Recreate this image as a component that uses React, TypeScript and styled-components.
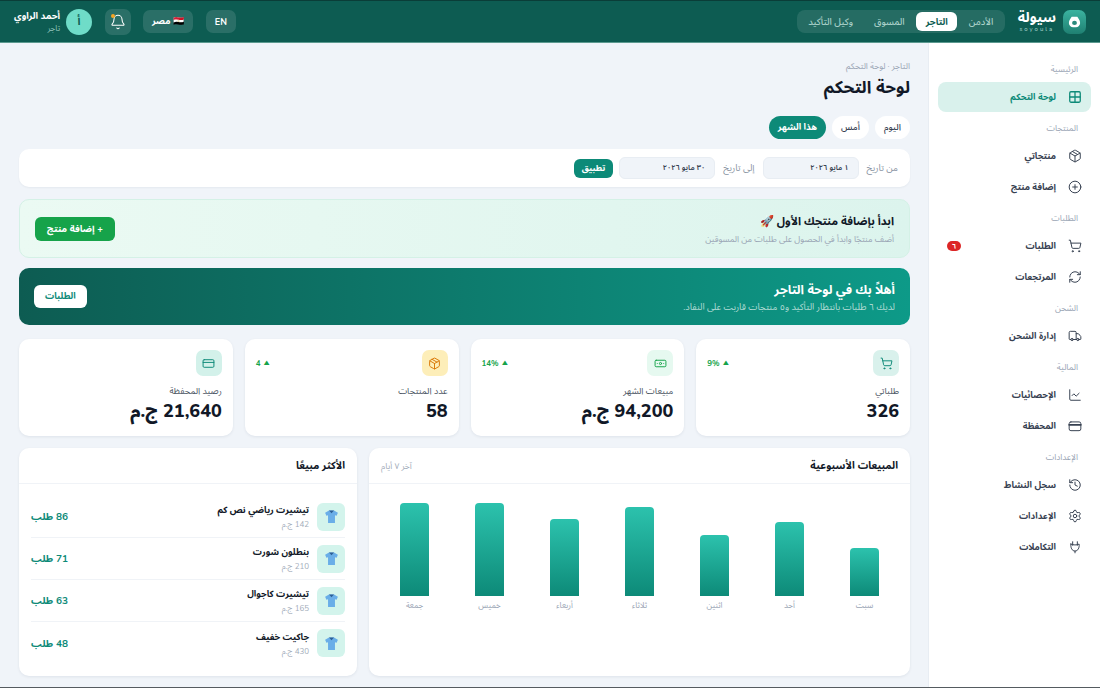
import React from 'react'
import styled, { createGlobalStyle } from 'styled-components'
import {
  Grid2x2, Package, CirclePlus, ShoppingCart, RefreshCw, Truck, ChartLine,
  History, Settings, Bell, Banknote, CreditCard,
} from 'lucide-react'

const GlobalStyle = createGlobalStyle`
  * { box-sizing: border-box; }
  html, body { margin: 0; padding: 0; height: 100%; }
  body {
    font-family: "Nunito", "Inter", "Noto Sans Arabic", "DejaVu Sans", sans-serif;
    background: #f0f4f9;
    color: #111827;
  }
`

const Shell = styled.div`
  width: 1100px;
  height: 688px;
  overflow: hidden;
  display: flex;
  flex-direction: column;
  border-bottom: 1px solid #555b60;
`

const Header = styled.header`
  height: 43px;
  flex: none;
  display: flex;
  align-items: center;
  justify-content: space-between;
  padding: 0 14px;
  background: #0d5c52;
  border-top: 1px solid #0a3d38;
  border-bottom: 1px solid #5c9a90;
`

const HeaderSide = styled.div`
  display: flex;
  align-items: center;
`

const LogoBox = styled.div`
  width: 23px;
  height: 24px;
  border-radius: 7px;
  background: linear-gradient(180deg, #3bb3a0, #1f8072);
  display: flex;
  align-items: center;
  justify-content: center;
  margin-left: 7px;
`

const LogoText = styled.div`
  display: flex;
  flex-direction: column;
  align-items: center;
  margin-left: 13px;
`

const LogoName = styled.span`
  font-size: 14px;
  font-weight: 700;
  line-height: 16px;
  color: #fff;
`

const LogoLatin = styled.span`
  font-size: 6px;
  line-height: 7px;
  letter-spacing: 2px;
  color: #a7d5cd;
`

const RoleTabs = styled.div`
  height: 23px;
  display: flex;
  align-items: center;
  gap: 2px;
  padding: 2px;
  border-radius: 8px;
  background: rgba(255, 255, 255, 0.1);
`

const RoleTab = styled.div<{ $active?: boolean }>`
  height: 19px;
  display: flex;
  align-items: center;
  padding: 0 9.5px;
  border-radius: 6px;
  font-size: 9.3px;
  font-weight: ${(p) => (p.$active ? 700 : 500)};
  color: ${(p) => (p.$active ? '#0d5c52' : '#a9d0c9')};
  background: ${(p) => (p.$active ? '#fff' : 'transparent')};
`

const HeaderButton = styled.div`
  height: 23px;
  padding: 0 9px;
  margin-right: 13px;
  display: flex;
  align-items: center;
  gap: 6px;
  border-radius: 7px;
  background: rgba(255, 255, 255, 0.12);
  color: #fff;
  font-size: 9px;
  font-weight: 700;
`

const BellButton = styled.div`
  position: relative;
  width: 26px;
  height: 26px;
  margin-right: 12px;
  display: flex;
  align-items: center;
  justify-content: center;
  border-radius: 7px;
  background: rgba(255, 255, 255, 0.12);
  color: #fff;
`

const BellDot = styled.span`
  position: absolute;
  top: 5px;
  left: 6px;
  width: 4px;
  height: 4px;
  border-radius: 50%;
  background: #f5a524;
`

const Avatar = styled.div`
  width: 26px;
  height: 26px;
  margin-right: 13px;
  border-radius: 50%;
  background: #6fdcc8;
  color: #0d5c52;
  font-size: 11px;
  font-weight: 700;
  display: flex;
  align-items: center;
  justify-content: center;
`

const UserInfo = styled.div`
  margin-right: 6px;
  display: flex;
  flex-direction: column;
`

const UserName = styled.span`
  font-size: 9.3px;
  font-weight: 700;
  line-height: 13px;
  color: #fff;
`

const UserRole = styled.span`
  font-size: 8px;
  line-height: 11px;
  color: #8fc2b9;
`

const Body = styled.div`
  flex: 1;
  min-height: 0;
  display: flex;
`

const Sidebar = styled.aside`
  width: 172px;
  flex: none;
  background: #fff;
  padding: 20px 9px 0 9px;
  border-left: 1px solid #e8edf3;
`

const NavGroup = styled.div`
  font-size: 8.5px;
  line-height: 12px;
  color: #9aa5b5;
  padding: 0 13px 0 0;
  margin: 0 0 7px;
`

const NavItem = styled.div<{ $active?: boolean }>`
  position: relative;
  height: 30px;
  display: flex;
  align-items: center;
  gap: 12px;
  padding: 0 9px 0 0;
  margin-bottom: 1px;
  border-radius: 8px;
  font-size: 9px;
  font-weight: 700;
  color: ${(p) => (p.$active ? '#0d8a78' : '#374151')};
  background: ${(p) => (p.$active ? '#d9f1ec' : 'transparent')};
`

const NavBadge = styled.span`
  position: absolute;
  left: 9px;
  top: 10px;
  width: 14px;
  height: 10px;
  border-radius: 5px;
  background: #dc2626;
  color: #fff;
  font-size: 7px;
  font-weight: 700;
  display: flex;
  align-items: center;
  justify-content: center;
`

const NavSection = styled.div`
  margin-bottom: 10px;
`

const Main = styled.main`
  flex: 1;
  min-width: 0;
  padding: 17px 18px 0 19px;
  display: flex;
  flex-direction: column;
`

const Crumb = styled.div`
  font-size: 8.5px;
  line-height: 13px;
  color: #9aa5b5;
`

const Title = styled.h1`
  margin: 2px 0 0;
  font-size: 17px;
  line-height: 25px;
  font-weight: 700;
  color: #111827;
`

const Chips = styled.div`
  display: flex;
  gap: 6px;
  margin-top: 16px;
`

const Chip = styled.div<{ $active?: boolean }>`
  height: 23px;
  padding: 0 9px;
  display: flex;
  align-items: center;
  border-radius: 12px;
  font-size: 9px;
  font-weight: ${(p) => (p.$active ? 700 : 500)};
  color: ${(p) => (p.$active ? '#fff' : '#374151')};
  background: ${(p) => (p.$active ? '#0d8a78' : '#fff')};
`

const FilterCard = styled.div`
  height: 38px;
  margin-top: 10px;
  display: flex;
  align-items: center;
  gap: 8px;
  padding: 0 12px;
  background: #fff;
  border-radius: 10px;
  box-shadow: 0 1px 2px rgba(15, 40, 60, 0.05);
`

const FilterLabel = styled.span`
  font-size: 9.3px;
  color: #8a94a3;
`

const DateField = styled.div`
  width: 96px;
  height: 22px;
  padding: 0 9px;
  display: flex;
  align-items: center;
  border-radius: 6px;
  background: #f0f4f9;
  border: 1px solid #e8edf3;
  font-size: 7.5px;
  font-weight: 600;
  color: #374151;
`

const ApplyButton = styled.div`
  height: 19px;
  padding: 0 8px;
  margin-right: -2px;
  display: flex;
  align-items: center;
  border-radius: 6px;
  background: #0d8a78;
  color: #fff;
  font-size: 8.5px;
  font-weight: 700;
`

const Banner = styled.div<{ $dark?: boolean }>`
  height: ${(p) => (p.$dark ? '57px' : '59px')};
  margin-top: ${(p) => (p.$dark ? '10px' : '12px')};
  display: flex;
  align-items: center;
  justify-content: space-between;
  padding: 0 15px;
  border-radius: 10px;
  background: ${(p) =>
    p.$dark
      ? 'linear-gradient(270deg, #0d9a88, #0d5c52)'
      : 'linear-gradient(270deg, #dcf4ed, #ebfaf3)'};
  border: ${(p) => (p.$dark ? '0' : '1px solid #d4f1e6')};
`

const BannerTitle = styled.div<{ $dark?: boolean }>`
  font-size: ${(p) => (p.$dark ? '12.5px' : '11.3px')};
  line-height: 17px;
  font-weight: 700;
  color: ${(p) => (p.$dark ? '#fff' : '#111827')};
`

const BannerText = styled.div<{ $dark?: boolean }>`
  margin-top: 3px;
  font-size: ${(p) => (p.$dark ? '9.2px' : '8.6px')};
  line-height: 12px;
  color: ${(p) => (p.$dark ? '#b2dcd5' : '#9aa5b5')};
`

const BannerButton = styled.div<{ $white?: boolean }>`
  height: ${(p) => (p.$white ? '23px' : '24px')};
  padding: 0 ${(p) => (p.$white ? '11px' : '12px')};
  display: flex;
  align-items: center;
  border-radius: 6px;
  font-size: ${(p) => (p.$white ? '9px' : '9.5px')};
  font-weight: 700;
  color: ${(p) => (p.$white ? '#0d8a78' : '#fff')};
  background: ${(p) => (p.$white ? '#fff' : '#16a34a')};
`

const StatsRow = styled.div`
  margin-top: 14px;
  display: grid;
  grid-template-columns: repeat(4, 1fr);
  gap: 12px;
`

const StatCard = styled.div`
  height: 97px;
  padding: 11px 11px 0;
  background: #fff;
  border-radius: 10px;
  box-shadow: 0 1px 3px rgba(15, 40, 60, 0.08);
`

const StatTop = styled.div`
  display: flex;
  justify-content: space-between;
  align-items: center;
`

const StatIcon = styled.div<{ $bg: string; $fg: string }>`
  width: 26px;
  height: 26px;
  border-radius: 7px;
  background: ${(p) => p.$bg};
  color: ${(p) => p.$fg};
  display: flex;
  align-items: center;
  justify-content: center;
`

const Trend = styled.span`
  display: flex;
  align-items: center;
  gap: 3px;
  font-size: 8px;
  font-weight: 700;
  color: #16a34a;
`

const TrendArrow = styled.span`
  font-size: 6px;
`

const StatLabel = styled.div`
  margin-top: 8px;
  font-size: 9px;
  line-height: 14px;
  color: #4b5563;
`

const StatValue = styled.div`
  margin-top: 1px;
  font-size: 18px;
  line-height: 24px;
  font-weight: 800;
  color: #111827;
`

const BottomRow = styled.div`
  margin-top: 12px;
  display: grid;
  grid-template-columns: 1.6fr 1fr;
  gap: 12px;
`

const Panel = styled.section`
  height: 228px;
  background: #fff;
  border-radius: 10px;
  box-shadow: 0 1px 3px rgba(15, 40, 60, 0.08);
  display: flex;
  flex-direction: column;
`

const PanelHead = styled.div`
  height: 36px;
  flex: none;
  padding: 0 12px;
  display: flex;
  align-items: center;
  justify-content: space-between;
  border-bottom: 1px solid #f0f3f7;
`

const PanelTitle = styled.div`
  font-size: 10.4px;
  font-weight: 700;
  color: #111827;
`

const PanelNote = styled.div`
  font-size: 8.5px;
  color: #a3adba;
`

const Chart = styled.div`
  height: 110px;
  margin-top: 19px;
  padding: 0 16px;
  display: grid;
  grid-template-columns: repeat(7, 1fr);
  gap: 16px;
`

const ChartColumn = styled.div`
  display: flex;
  flex-direction: column;
  align-items: center;
  justify-content: flex-end;
`

const Bar = styled.div`
  width: 29px;
  border-radius: 4px 4px 0 0;
  background: linear-gradient(180deg, #2cc2ad, #0d8a78);
`

const BarLabel = styled.div`
  height: 14px;
  margin-top: 3px;
  font-size: 8px;
  line-height: 14px;
  color: #9aa5b5;
`

const ProductList = styled.div`
  padding: 12px 12px 0;
`

const ProductRow = styled.div`
  height: 42px;
  display: flex;
  align-items: center;
  justify-content: space-between;
  border-bottom: 1px solid #f0f3f7;

  &:last-child {
    border-bottom: 0;
  }
`

const ProductMain = styled.div`
  display: flex;
  align-items: center;
  gap: 8px;
`

const ProductThumb = styled.div`
  width: 28px;
  height: 28px;
  border-radius: 6px;
  background: #d3f4ec;
  display: flex;
  align-items: center;
  justify-content: center;
`

const ProductName = styled.div`
  font-size: 9px;
  line-height: 14px;
  font-weight: 700;
  color: #111827;
`

const ProductPrice = styled.div`
  margin-top: 2px;
  font-size: 8px;
  line-height: 11px;
  color: #a3adba;
`

const ProductSales = styled.div`
  font-size: 10px;
  font-weight: 700;
  color: #0d8a78;
`

type IconProps = { size?: number; strokeWidth?: number }

function PlugIcon({ size = 14, strokeWidth = 1.6 }: IconProps) {
  return (
    <svg width={size} height={size} viewBox='0 0 24 24' fill='none' stroke='currentColor' strokeWidth={strokeWidth} strokeLinecap='round' strokeLinejoin='round'>
      <path d='M8 3v6M16 3v6' />
      <path d='M5 7c-1 6 2 12 7 12s8-6 7-12c-4 2-10 2-14 0z' />
      <path d='M12 19v3' />
    </svg>
  )
}

function WalletIcon({ size = 14, strokeWidth = 1.6 }: IconProps) {
  return (
    <svg width={size} height={size} viewBox='0 0 24 24' fill='none' stroke='currentColor' strokeWidth={strokeWidth} strokeLinecap='round' strokeLinejoin='round'>
      <rect x='2' y='5' width='20' height='15' rx='3' />
      <path d='M2 10h20' strokeWidth={strokeWidth * 1.8} />
    </svg>
  )
}

function TeeIcon() {
  return (
    <svg width='15' height='15' viewBox='0 0 16 16'>
      <path d='M5.300 1.500 1.200 4l1.300 3.200 1.800-.6V15h7.400V6.600l1.800.6L14.800 4l-4.100-2.500z' fill='#6aaee8' />
      <path d='M5.300 1.500h5.400L8 4.500z' fill='#2c5f95' />
    </svg>
  )
}

const navData = [
  { group: 'الرئيسية', items: [{ label: 'لوحة التحكم', Icon: Grid2x2, active: true }] },
  { group: 'المنتجات', items: [{ label: 'منتجاتي', Icon: Package }, { label: 'إضافة منتج', Icon: CirclePlus }] },
  { group: 'الطلبات', items: [{ label: 'الطلبات', Icon: ShoppingCart, badge: '٦' }, { label: 'المرتجعات', Icon: RefreshCw }] },
  { group: 'الشحن', items: [{ label: 'إدارة الشحن', Icon: Truck }] },
  { group: 'المالية', items: [{ label: 'الإحصائيات', Icon: ChartLine }, { label: 'المحفظة', Icon: WalletIcon }] },
  { group: 'الإعدادات', items: [{ label: 'سجل النشاط', Icon: History }, { label: 'الإعدادات', Icon: Settings }, { label: 'التكاملات', Icon: PlugIcon }] },
]

const stats = [
  { label: 'طلباتي', value: '326', trend: '9%', Icon: ShoppingCart, bg: '#d9f1ec', fg: '#0d8a78' },
  { label: 'مبيعات الشهر', value: '94,200 ج.م', trend: '14%', Icon: Banknote, bg: '#e6f9f0', fg: '#16a34a' },
  { label: 'عدد المنتجات', value: '58', trend: '4', Icon: Package, bg: '#fdeeb9', fg: '#d97706' },
  { label: 'رصيد المحفظة', value: '21,640 ج.م', trend: '', Icon: CreditCard, bg: '#d3f1ea', fg: '#0d8a78' },
]

const bars = [
  { day: 'سبت', height: 48 },
  { day: 'أحد', height: 74 },
  { day: 'اثنين', height: 61 },
  { day: 'ثلاثاء', height: 89 },
  { day: 'أربعاء', height: 77 },
  { day: 'خميس', height: 93 },
  { day: 'جمعة', height: 93 },
]

const products = [
  { name: 'تيشيرت رياضي نص كم', price: '142 ج.م', sales: '86 طلب' },
  { name: 'بنطلون شورت', price: '210 ج.م', sales: '71 طلب' },
  { name: 'تيشيرت كاجوال', price: '165 ج.م', sales: '63 طلب' },
  { name: 'جاكيت خفيف', price: '430 ج.م', sales: '48 طلب' },
]

export default function App() {
  return (
    <Shell dir='rtl'>
      <GlobalStyle />
      <Header>
        <HeaderSide>
          <LogoBox>
            <svg width='15' height='15' viewBox='0 0 16 16'>
              <path d='M5 3h6c1 2 3 3.500 3 6.500A4.500 4.500 0 0 1 9.500 14h-3A4.500 4.500 0 0 1 2 9.500C2 6.500 4 5 5 3z' fill='#fff' />
              <ellipse cx='8' cy='9.500' rx='2.600' ry='2.200' fill='#2a8a7c' />
            </svg>
          </LogoBox>
          <LogoText>
            <LogoName>سيولة</LogoName>
            <LogoLatin>soyoula</LogoLatin>
          </LogoText>
          <RoleTabs>
            <RoleTab>الأدمن</RoleTab>
            <RoleTab $active>التاجر</RoleTab>
            <RoleTab>المسوق</RoleTab>
            <RoleTab>وكيل التأكيد</RoleTab>
          </RoleTabs>
        </HeaderSide>
        <HeaderSide>
          <HeaderButton>EN</HeaderButton>
          <HeaderButton>🇪🇬 مصر</HeaderButton>
          <BellButton>
            <Bell size={16} strokeWidth={1.6} />
            <BellDot />
          </BellButton>
          <Avatar>أ</Avatar>
          <UserInfo>
            <UserName>أحمد الراوي</UserName>
            <UserRole>تاجر</UserRole>
          </UserInfo>
        </HeaderSide>
      </Header>
      <Body>
        <Sidebar>
          {navData.map((section) => (
            <NavSection key={section.group}>
              <NavGroup>{section.group}</NavGroup>
              {section.items.map((item: any) => (
                <NavItem key={item.label} $active={item.active}>
                  <item.Icon size={14} strokeWidth={item.active ? 2.2 : 1.7} />
                  {item.label}
                  {item.badge && <NavBadge>{item.badge}</NavBadge>}
                </NavItem>
              ))}
            </NavSection>
          ))}
        </Sidebar>
        <Main>
          <Crumb>التاجر · لوحة التحكم</Crumb>
          <Title>لوحة التحكم</Title>
          <Chips>
            <Chip>اليوم</Chip>
            <Chip>أمس</Chip>
            <Chip $active>هذا الشهر</Chip>
          </Chips>
          <FilterCard>
            <FilterLabel>من تاريخ</FilterLabel>
            <DateField>١ مايو ٢٠٢٦</DateField>
            <FilterLabel>إلى تاريخ</FilterLabel>
            <DateField>٣٠ مايو ٢٠٢٦</DateField>
            <ApplyButton>تطبيق</ApplyButton>
          </FilterCard>
          <Banner>
            <div>
              <BannerTitle>ابدأ بإضافة منتجك الأول 🚀</BannerTitle>
              <BannerText>أضف منتجًا وابدأ في الحصول على طلبات من المسوقين</BannerText>
            </div>
            <BannerButton>+ إضافة منتج</BannerButton>
          </Banner>
          <Banner $dark>
            <div>
              <BannerTitle $dark>أهلاً بك في لوحة التاجر</BannerTitle>
              <BannerText $dark>لديك ٦ طلبات بانتظار التأكيد و٥ منتجات قاربت على النفاد.</BannerText>
            </div>
            <BannerButton $white>الطلبات</BannerButton>
          </Banner>
          <StatsRow>
            {stats.map((stat) => (
              <StatCard key={stat.label}>
                <StatTop>
                  <StatIcon $bg={stat.bg} $fg={stat.fg}>
                    <stat.Icon size={13} strokeWidth={1.8} />
                  </StatIcon>
                  {stat.trend && (
                    <Trend>
                      <TrendArrow>▲</TrendArrow>
                      {stat.trend}
                    </Trend>
                  )}
                </StatTop>
                <StatLabel>{stat.label}</StatLabel>
                <StatValue>{stat.value}</StatValue>
              </StatCard>
            ))}
          </StatsRow>
          <BottomRow>
            <Panel>
              <PanelHead>
                <PanelTitle>المبيعات الأسبوعية</PanelTitle>
                <PanelNote>آخر ٧ أيام</PanelNote>
              </PanelHead>
              <Chart>
                {bars.map((bar) => (
                  <ChartColumn key={bar.day}>
                    <Bar style={{ height: bar.height }} />
                    <BarLabel>{bar.day}</BarLabel>
                  </ChartColumn>
                ))}
              </Chart>
            </Panel>
            <Panel>
              <PanelHead>
                <PanelTitle>الأكثر مبيعًا</PanelTitle>
              </PanelHead>
              <ProductList>
                {products.map((product) => (
                  <ProductRow key={product.name}>
                    <ProductMain>
                      <ProductThumb>
                        <TeeIcon />
                      </ProductThumb>
                      <div>
                        <ProductName>{product.name}</ProductName>
                        <ProductPrice>{product.price}</ProductPrice>
                      </div>
                    </ProductMain>
                    <ProductSales>{product.sales}</ProductSales>
                  </ProductRow>
                ))}
              </ProductList>
            </Panel>
          </BottomRow>
        </Main>
      </Body>
    </Shell>
  )
}
